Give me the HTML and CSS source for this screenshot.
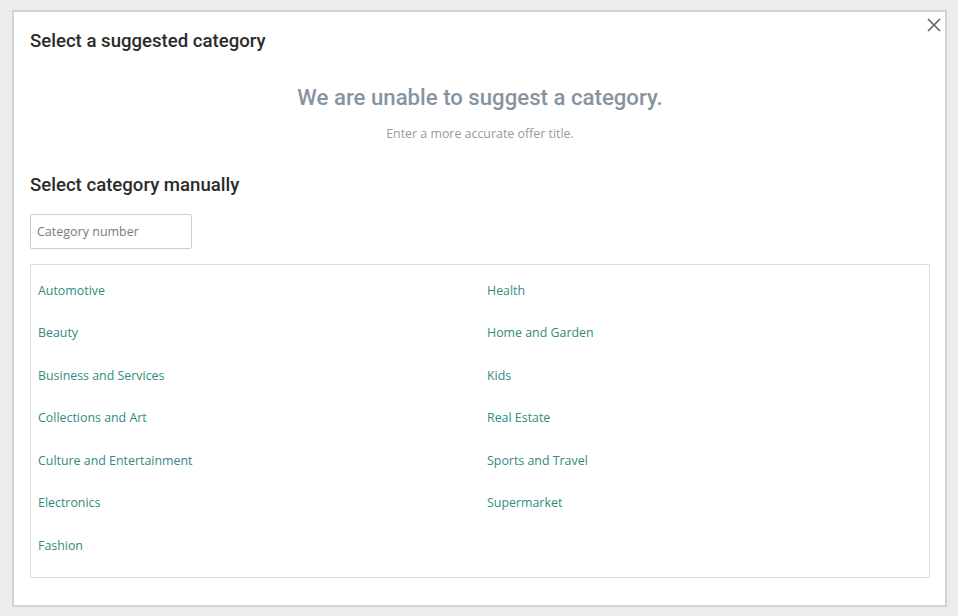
FILE: index.html
```html
<!DOCTYPE html>
<html lang="en">
<head>
<meta charset="utf-8">
<title>Select category</title>
<link rel="stylesheet" href="styles.css">
</head>
<body>
<div class="dialog">
  <button class="close" aria-label="Close">
    <svg width="14" height="14" viewBox="0 0 14 14"><path d="M1 1 L13 13 M13 1 L1 13" stroke="#616161" stroke-width="1.6" fill="none"/></svg>
  </button>
  <h2 class="title">Select a suggested category</h2>
  <p class="empty-title">We are unable to suggest a category.</p>
  <p class="empty-hint">Enter a more accurate offer title.</p>
  <h2 class="title manual">Select category manually</h2>
  <input class="cat-input" type="text" placeholder="Category number">
  <ul class="cat-list">
    <li><a href="#">Automotive</a></li>
    <li><a href="#">Beauty</a></li>
    <li><a href="#">Business and Services</a></li>
    <li><a href="#">Collections and Art</a></li>
    <li><a href="#">Culture and Entertainment</a></li>
    <li><a href="#">Electronics</a></li>
    <li><a href="#">Fashion</a></li>
    <li><a href="#">Health</a></li>
    <li><a href="#">Home and Garden</a></li>
    <li><a href="#">Kids</a></li>
    <li><a href="#">Real Estate</a></li>
    <li><a href="#">Sports and Travel</a></li>
    <li><a href="#">Supermarket</a></li>
  </ul>
</div>
</body>
</html>
```
FILE: styles.css
```css
html, body {
  margin: 0;
  padding: 0;
}
body {
  background: #ececec;
  width: 958px;
  height: 616px;
  overflow: hidden;
  padding-top: 10px;
  padding-left: 12px;
  box-sizing: border-box;
  font-family: "Open Sans", "Liberation Sans", sans-serif;
}
.dialog {
  position: relative;
  box-sizing: border-box;
  width: 935px;
  height: 597px;
  background: #fff;
  border: 2px solid #d2d2d2;
  padding: 19px 15px 0 16px;
  display: flex;
  flex-direction: column;
}
.close {
  position: absolute;
  top: 6px;
  right: 4px;
  background: none;
  border: 0;
  padding: 0;
  width: 14px;
  height: 14px;
  cursor: pointer;
}
.close svg { display: block; }
.title {
  margin: 0;
  font-family: Roboto, "Liberation Sans", sans-serif;
  font-weight: 500;
  font-size: 18.6px;
  line-height: 20px;
  color: #2b2b2b;
}
.empty-title {
  margin: 33px 0 0;
  text-align: center;
  font-family: Roboto, "Liberation Sans", sans-serif;
  font-weight: 500;
  font-size: 22.2px;
  line-height: 26px;
  color: #8794a0;
}
.empty-hint {
  margin: 16px 0 0;
  text-align: center;
  font-size: 12.4px;
  line-height: 16px;
  color: #9a9a9a;
}
.manual {
  margin-top: 32px;
  font-weight: 500;
  font-size: 18.6px;
  line-height: 22px;
}
.cat-input {
  margin-top: 18px;
  width: 162px;
  height: 35px;
  box-sizing: border-box;
  border: 1px solid #cdcdcd;
  border-radius: 2px;
  padding: 0 6px;
  font-family: "Open Sans", "Liberation Sans", sans-serif;
  font-size: 12.5px;
  color: #333;
  outline: none;
}
.cat-input::placeholder { color: #7a7a7a; }
.cat-list {
  margin: 15px 0 0;
  list-style: none;
  width: 900px;
  box-sizing: border-box;
  border: 1px solid #dcdcdc;
  padding: 4.5px 0 10px;
  display: grid;
  grid-template-columns: 449px 449px;
  grid-template-rows: repeat(7, 42.5px);
  grid-auto-flow: column;
}
.cat-list li {
  display: flex;
  align-items: center;
  padding-left: 7px;
}
.cat-list a {
  font-size: 12.4px;
  line-height: 18px;
  color: #2f8c80;
  text-decoration: none;
}
```
